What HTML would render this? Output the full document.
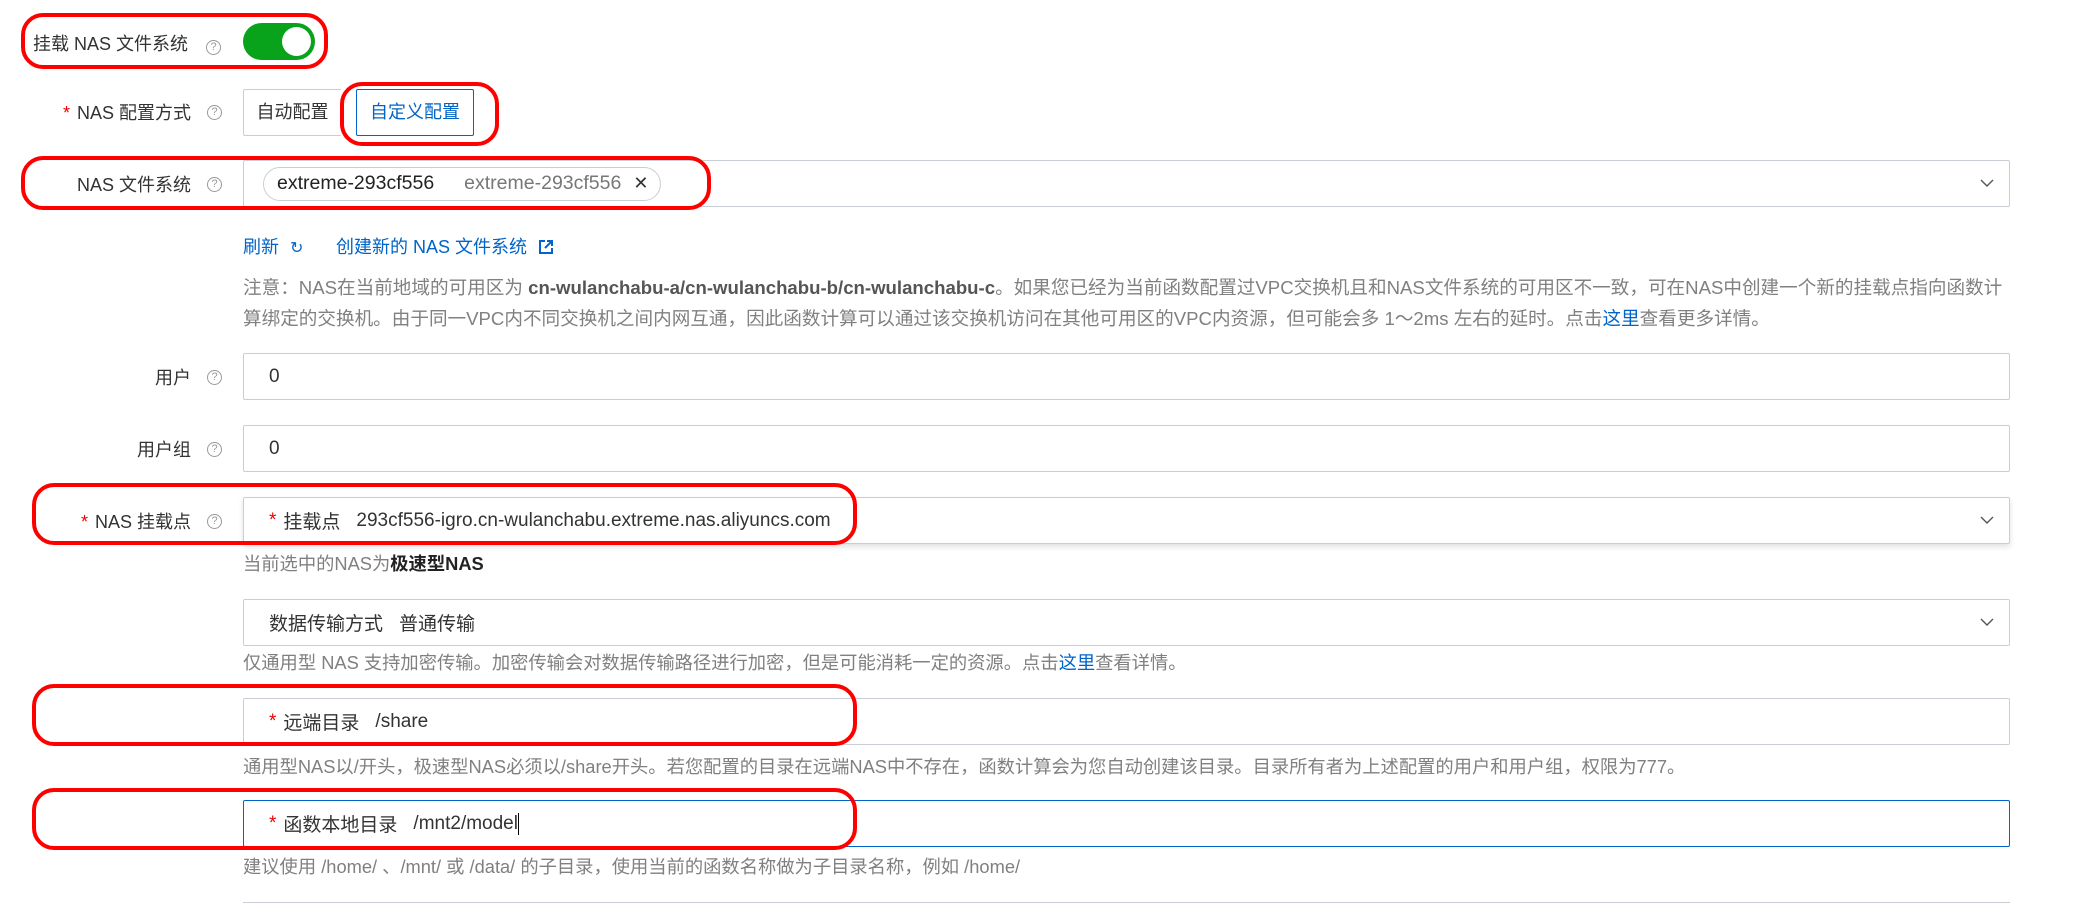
<!DOCTYPE html>
<html><head><meta charset="utf-8"><style>
*{box-sizing:border-box;margin:0;padding:0}
body{width:2092px;height:904px;background:#fff;position:relative;overflow:hidden;font-family:"Liberation Sans","Noto Sans CJK SC",sans-serif;font-size:17px;color:#333}
.a{position:absolute;white-space:nowrap}
.lbl{position:absolute;right:1870px;display:flex;align-items:center;gap:6px;color:#333;font-size:18px;white-space:nowrap}
.q{display:inline-block;width:15px;height:15px;border:1.3px solid #999;border-radius:50%;font-size:11px;line-height:13px;text-align:center;color:#999;margin-left:10px}
.req{color:#e00;margin-right:7px}
.box{position:absolute;left:243px;width:1767px;height:47px;border:1px solid #c9ced6;border-radius:2px;background:#fff;display:flex;align-items:center;padding-left:25px;font-size:19px;color:#333}
.arrow{position:absolute;right:14px;top:14px;width:16px;height:16px}
.help{position:absolute;left:243px;font-size:18.3px;color:#808080;white-space:nowrap}
.red{position:absolute;border:4px solid #f00;border-radius:22px}
.blue{color:#0064c8}
.gap{margin-left:16px}
</style></head><body>
<div class="a" style="left:33px;top:30px;font-size:18px">挂载 NAS 文件系统<span class="q" style="margin-left:18px">?</span></div>
<div class="a" style="left:243px;top:23px;width:72px;height:37px;border-radius:19px;background:#08a31a"><div style="position:absolute;right:4px;top:4px;width:29px;height:29px;border-radius:50%;background:#fff"></div></div>
<div class="red" style="left:21px;top:13px;width:307px;height:56px"></div>

<div class="lbl" style="top:99px"><span><span class="req">*</span>NAS 配置方式</span><span class="q">?</span></div>
<div class="a" style="left:243px;top:89px;width:98px;height:47px;border:1px solid #c9ced6;border-right:none;border-radius:2px 0 0 2px;text-align:center;line-height:45px;font-size:18px">自动配置</div>
<div class="a" style="left:356px;top:89px;width:118px;height:47px;border:1.5px solid #0064c8;border-radius:2px;text-align:center;line-height:44px;color:#0064c8;font-size:18px">自定义配置</div>
<div class="red" style="left:340px;top:82px;width:159px;height:64px"></div>

<div class="lbl" style="top:171px"><span>NAS 文件系统</span><span class="q">?</span></div>
<div class="box" style="top:160px;height:47px;padding-left:19px">
<div style="height:34px;border:1px solid #c9ced6;border-radius:17px;padding:0 12px 0 13px;display:flex;align-items:center;font-size:19.5px"><span style="color:#222">extreme-293cf556</span><span style="color:#777;margin-left:30px">extreme-293cf556</span><span style="margin-left:12px;font-size:18px;color:#333">✕</span></div>
<svg class="arrow" viewBox="0 0 16 16"><path d="M2 5l6 6 6-6" fill="none" stroke="#555" stroke-width="1.4"/></svg></div>
<div class="red" style="left:21px;top:156px;width:690px;height:54px"></div>

<div class="a blue" style="left:243px;top:233px;font-size:18px">刷新 <span style="font-size:16px;margin-left:6px">↻</span></div>
<div class="a blue" style="left:336px;top:233px;font-size:18px">创建新的 NAS 文件系统 <svg width="16" height="16" viewBox="0 0 16 16" style="vertical-align:-2px;margin-left:6px"><path d="M7 2H2v12h12V9M9 2h5v5M14 2L7 9" fill="none" stroke="#0064c8" stroke-width="2"/></svg></div>
<div class="help" style="top:272px;line-height:31px;font-size:18.6px">注意：NAS在当前地域的可用区为 <b style="color:#555">cn-wulanchabu-a/cn-wulanchabu-b/cn-wulanchabu-c</b>。如果您已经为当前函数配置过VPC交换机且和NAS文件系统的可用区不一致，可在NAS中创建一个新的挂载点指向函数计<br>算绑定的交换机。由于同一VPC内不同交换机之间内网互通，因此函数计算可以通过该交换机访问在其他可用区的VPC内资源，但可能会多 1～2ms 左右的延时。点击<span class="blue">这里</span>查看更多详情。</div>

<div class="lbl" style="top:364px"><span>用户</span><span class="q">?</span></div>
<div class="box" style="top:353px">0</div>
<div class="lbl" style="top:436px"><span>用户组</span><span class="q">?</span></div>
<div class="box" style="top:425px">0</div>

<div class="lbl" style="top:508px"><span><span class="req">*</span>NAS 挂载点</span><span class="q">?</span></div>
<div class="box" style="top:497px;box-shadow:0 3px 6px rgba(0,0,0,.12)"><span class="req">*</span>挂载点<span class="gap">293cf556-igro.cn-wulanchabu.extreme.nas.aliyuncs.com</span><svg class="arrow" viewBox="0 0 16 16"><path d="M2 5l6 6 6-6" fill="none" stroke="#555" stroke-width="1.4"/></svg></div>
<div class="red" style="left:32px;top:483px;width:825px;height:62px"></div>
<div class="help" style="top:550px">当前选中的NAS为<b style="color:#222">极速型NAS</b></div>
<div class="box" style="top:599px">数据传输方式<span class="gap">普通传输</span><svg class="arrow" viewBox="0 0 16 16"><path d="M2 5l6 6 6-6" fill="none" stroke="#555" stroke-width="1.4"/></svg></div>
<div class="help" style="top:649px">仅通用型 NAS 支持加密传输。加密传输会对数据传输路径进行加密，但是可能消耗一定的资源。点击<span class="blue">这里</span>查看详情。</div>
<div class="box" style="top:698px"><span class="req">*</span>远端目录<span class="gap">/share</span></div>
<div class="red" style="left:32px;top:684px;width:825px;height:62px"></div>
<div class="help" style="top:753px">通用型NAS以/开头，极速型NAS必须以/share开头。若您配置的目录在远端NAS中不存在，函数计算会为您自动创建该目录。目录所有者为上述配置的用户和用户组，权限为777。</div>
<div class="box" style="top:800px;border:1.5px solid #0064c8"><span class="req">*</span>函数本地目录<span class="gap">/mnt2/model</span><span style="display:inline-block;width:1.5px;height:22px;background:#000"></span></div>
<div class="red" style="left:32px;top:788px;width:825px;height:62px"></div>
<div class="help" style="top:853px">建议使用 /home/ 、/mnt/ 或 /data/ 的子目录，使用当前的函数名称做为子目录名称，例如 /home/</div>
<div class="a" style="left:243px;top:902px;width:1767px;height:1px;background:#c9ced6"></div>
</body></html>
